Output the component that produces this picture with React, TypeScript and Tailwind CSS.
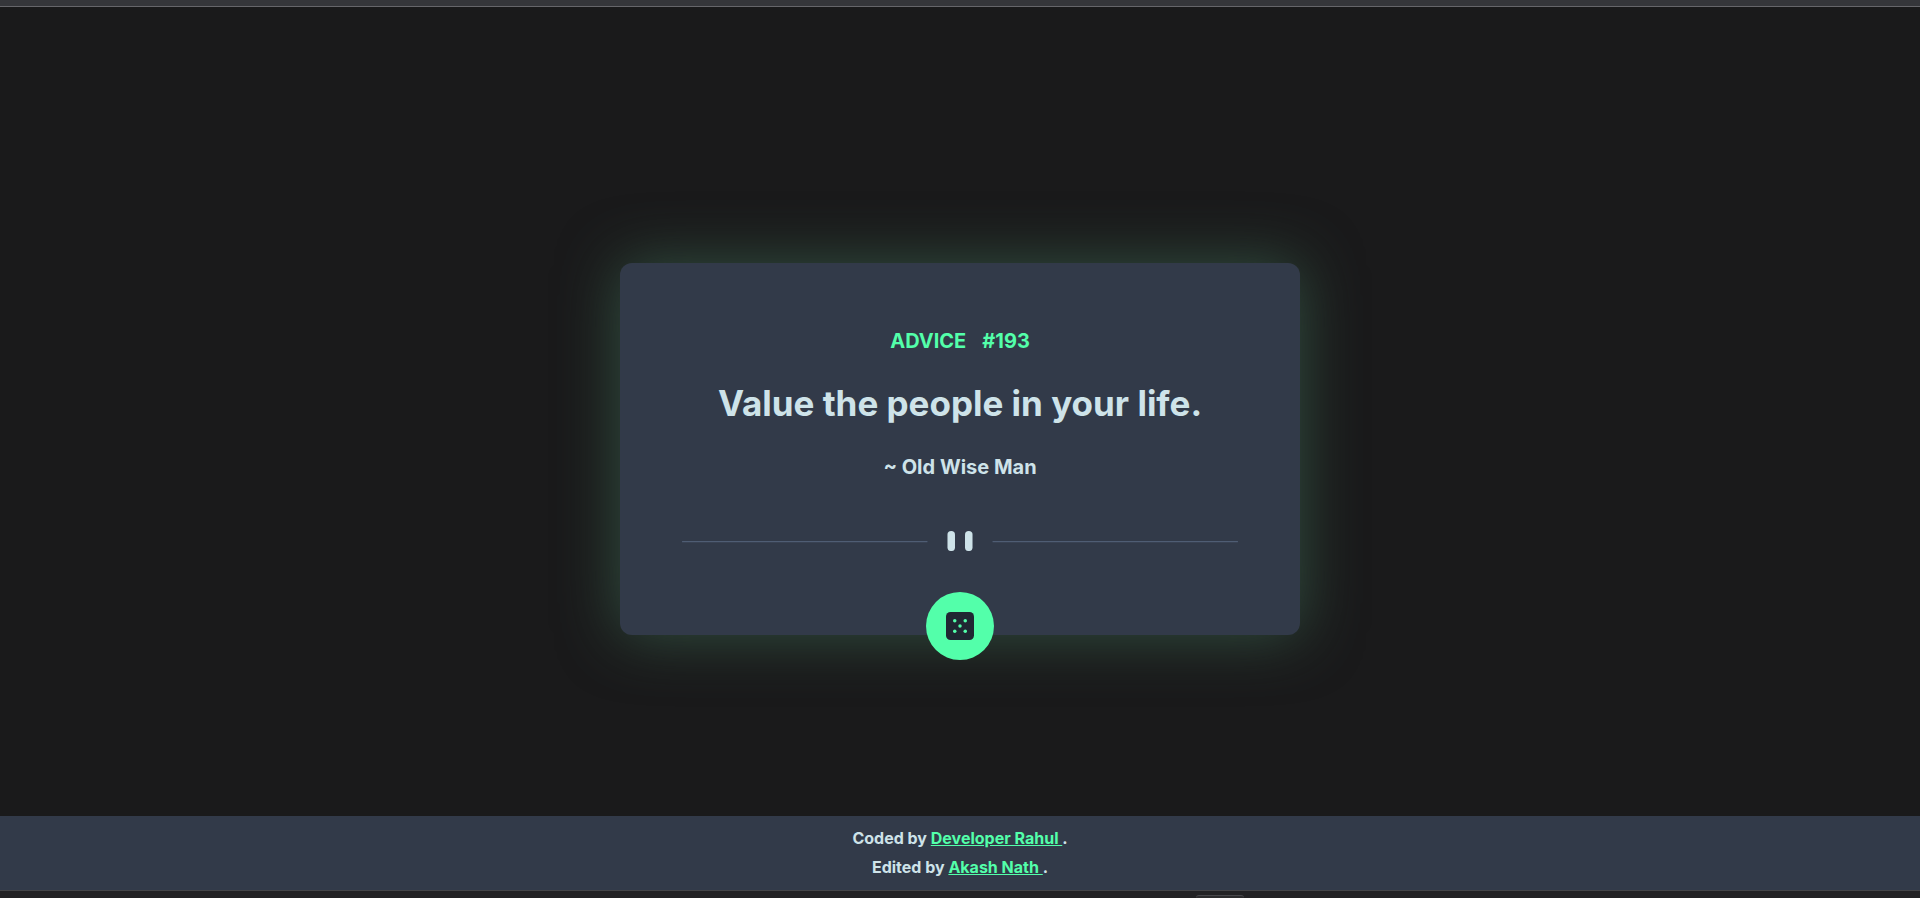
import { useState } from "react";

const slips = [
  { id: 193, advice: "Value the people in your life." },
  { id: 71, advice: "Measure twice, cut once." },
];

function Divider() {
  return (
    <svg className="mt-12 w-full" viewBox="0 0 444 16" fill="none" aria-hidden="true">
      <path fill="#4F5D74" d="M0 8h196v1H0zM248 8h196v1H248z" />
      <rect x="212" width="6" height="16" rx="3" fill="#CEE3E9" />
      <rect x="226" width="6" height="16" rx="3" fill="#CEE3E9" />
    </svg>
  );
}

function DiceIcon() {
  return (
    <svg className="size-7" viewBox="0 0 28 28" aria-hidden="true">
      <rect width="28" height="28" rx="4.5" fill="#202733" />
      <g fill="#53FFAA">
        <circle cx="8.75" cy="8.75" r="1.75" />
        <circle cx="19.25" cy="8.75" r="1.75" />
        <circle cx="14" cy="14" r="1.75" />
        <circle cx="8.75" cy="19.25" r="1.75" />
        <circle cx="19.25" cy="19.25" r="1.75" />
      </g>
    </svg>
  );
}

export default function App() {
  const [index, setIndex] = useState(0);
  const slip = slips[index];

  return (
    <div className="flex min-h-screen flex-col bg-[#1a1a1b] font-['Inter','Liberation_Sans',sans-serif] font-bold text-[#cee3e9]">
      <header className="h-[7px] border-b border-[#66666a] bg-[#35363a]" />
      <main className="flex grow items-center justify-center px-4 py-20">
        <section className="relative mt-[75px] w-full max-w-[680px] rounded-xl bg-[#323a49] px-[62px] pt-16 pb-[84px] text-center shadow-[0_0_60px_#325041]">
          <h1 className="flex justify-center gap-4 text-xl leading-7 text-[#53ffaa]">
            <span>ADVICE</span>
            <span>#{slip.id}</span>
          </h1>
          <p className="mt-6 text-[35px] leading-12">{slip.advice}</p>
          <p className="mt-6 text-xl leading-8">~ Old Wise Man</p>
          <Divider />
          <button
            type="button"
            aria-label="New advice"
            onClick={() => setIndex((index + 1) % slips.length)}
            className="absolute -bottom-[25px] left-1/2 flex size-[68px] -translate-x-1/2 cursor-pointer items-center justify-center rounded-full bg-[#53ffaa]"
          >
            <DiceIcon />
          </button>
        </section>
      </main>
      <footer className="bg-[#323a49] py-2 text-center text-base leading-[29px]">
        <p>
          Coded by{" "}
          <a href="#rahul" className="whitespace-pre text-[#53ffaa] underline">{"Developer Rahul "}</a>.
        </p>
        <p>
          Edited by{" "}
          <a href="#akash" className="whitespace-pre text-[#53ffaa] underline">{"Akash Nath "}</a>.
        </p>
      </footer>
      <div className="flex h-2 items-end justify-center border-t border-[#444548] bg-[#222224] pl-[520px]">
        <div className="h-[3px] w-12 rounded-t border-t border-[#48484b] bg-[#2b2b2d]" />
      </div>
    </div>
  );
}
